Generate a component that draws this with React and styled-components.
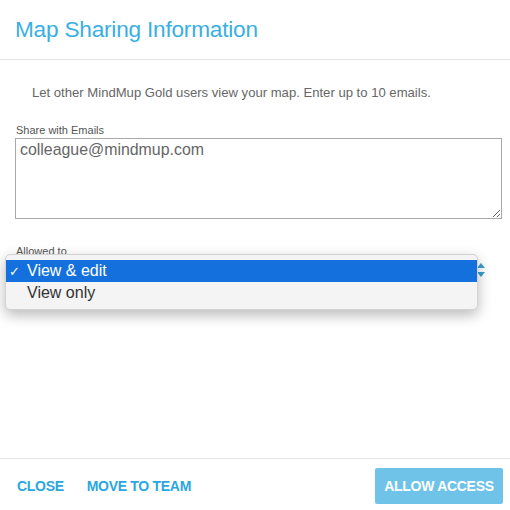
import React from "react";
import styled, { createGlobalStyle } from "styled-components";

const Global = createGlobalStyle`
  html, body {
    margin: 0;
    padding: 0;
    background: #fff;
  }
  body {
    font-family: "Liberation Sans", Arial, sans-serif;
  }
`;

const Modal = styled.div`
  width: 510px;
  height: 510px;
  display: flex;
  flex-direction: column;
  background: #fff;
  overflow: hidden;
`;

const Header = styled.div`
  height: 60px;
  box-sizing: border-box;
  padding: 15px 15px 0 15px;
  border-bottom: 1px solid #e5e5e5;
`;

const Title = styled.h3`
  margin: 0;
  font-size: 22.6px;
  font-weight: 300;
  color: #3aafe3;
  line-height: 30px;
  letter-spacing: -0.2px;
`;

const Body = styled.div`
  flex: 1;
  padding: 0 8px 0 15px;
`;

const Intro = styled.p`
  margin: 24px 0 0 17px;
  font-size: 13.1px;
  color: #666;
  line-height: 18px;
`;

const Label = styled.label`
  display: block;
  font-size: 11px;
  color: #555;
  line-height: 13px;
  margin-top: ${(p) => p.$top}px;
  margin-left: 1px;
`;

const Emails = styled.textarea`
  display: block;
  width: 487px;
  height: 81px;
  box-sizing: border-box;
  margin-top: 1px;
  border: 1px solid #a9a9a9;
  padding: 2px 4px;
  font-family: "Liberation Sans", Arial, sans-serif;
  font-size: 15.9px;
  color: #666;
  resize: vertical;
  outline: none;
`;

const SelectWrap = styled.div`
  position: relative;
  height: 24px;
  margin-top: -4px;
`;

const Arrows = styled.svg`
  position: absolute;
  left: 462px;
  top: 9px;
`;

const Menu = styled.ul`
  position: absolute;
  left: -10px;
  top: 0;
  width: 473px;
  box-sizing: border-box;
  margin: 0;
  padding: 5px 0;
  list-style: none;
  background: #f4f4f4;
  border: 1px solid #d2d2d2;
  border-radius: 5px;
  box-shadow: 0 5px 14px rgba(0, 0, 0, 0.28);
`;

const Option = styled.li`
  display: flex;
  align-items: center;
  height: 22px;
  padding-left: 2px;
  font-size: 16px;
  color: ${(p) => (p.$selected ? "#fff" : "#333")};
  background: ${(p) => (p.$selected ? "#1470dc" : "transparent")};
`;

const Check = styled.span`
  width: 19px;
  padding-left: 1px;
  box-sizing: border-box;
  font-size: 13px;
`;

const Footer = styled.div`
  height: 52px;
  box-sizing: border-box;
  display: flex;
  align-items: center;
  padding: 2px 7px 0 17px;
  border-top: 1px solid #e5e5e5;
  gap: 23px;
`;

const LinkButton = styled.button`
  border: none;
  background: none;
  padding: 0;
  font-family: "Liberation Sans", Arial, sans-serif;
  font-weight: bold;
  font-size: 14px;
  color: #2aa7df;
  letter-spacing: -0.3px;
  cursor: pointer;
`;

const Primary = styled.button`
  margin-left: auto;
  width: 128px;
  height: 36px;
  border: none;
  border-radius: 2px;
  background: #6fc3e8;
  color: #fff;
  font-family: "Liberation Sans", Arial, sans-serif;
  font-weight: bold;
  font-size: 14px;
  letter-spacing: -0.3px;
`;

export default function App() {
  return (
    <Modal>
      <Global />
      <Header>
        <Title>Map Sharing Information</Title>
      </Header>
      <Body>
        <Intro>Let other MindMup Gold users view your map. Enter up to 10 emails.</Intro>
        <Label $top={22}>Share with Emails</Label>
        <Emails defaultValue="colleague@mindmup.com" />
        <Label $top={26}>Allowed to</Label>
        <SelectWrap>
          <Arrows width="8" height="14" viewBox="0 0 8 14">
            <path d="M4 0 L8 5 L0 5 Z" fill="#3b9fd0" />
            <path d="M4 14 L8 9 L0 9 Z" fill="#3b9fd0" />
          </Arrows>
          <Menu>
            <Option $selected>
              <Check>✓</Check>View &amp; edit
            </Option>
            <Option>
              <Check />View only
            </Option>
          </Menu>
        </SelectWrap>
      </Body>
      <Footer>
        <LinkButton>CLOSE</LinkButton>
        <LinkButton>MOVE TO TEAM</LinkButton>
        <Primary>ALLOW ACCESS</Primary>
      </Footer>
    </Modal>
  );
}
